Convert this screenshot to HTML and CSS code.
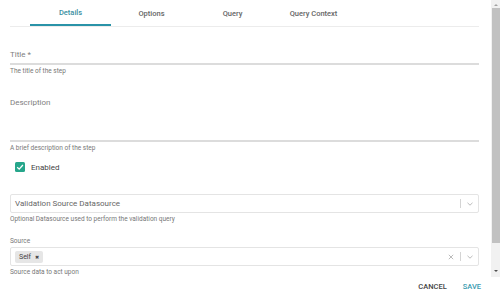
FILE: index.html
```html
<!DOCTYPE html>
<html>
<head>
<meta charset="utf-8">
<link rel="stylesheet" href="styles.css">
</head>
<body>
<div class="dialog">
  <div class="scroller">
    <div class="main">
      <nav class="tabs">
        <div class="tab active">Details</div>
        <div class="tab">Options</div>
        <div class="tab">Query</div>
        <div class="tab">Query Context</div>
      </nav>
      <div class="field title-field">
        <div class="label">Title *</div>
        <div class="underline"></div>
        <div class="helper">The title of the step</div>
      </div>
      <div class="field desc-field">
        <div class="label">Description</div>
        <div class="underline"></div>
        <div class="helper">A brief description of the step</div>
      </div>
      <div class="check-row">
        <span class="checkbox">
          <svg viewBox="0 0 10 10" width="10" height="10"><path d="M2.2 5.2 L4.2 7.1 L7.9 3" fill="none" stroke="#fff" stroke-width="1.3"/></svg>
        </span>
        <span class="check-label">Enabled</span>
      </div>
      <div class="select first-select">
        <span class="select-value placeholder">Validation Source Datasource</span>
        <span class="indicators">
          <span class="sep"></span>
          <svg class="chev" viewBox="0 0 10 10" width="10" height="10"><path d="M2.5 3.8 L5 6.2 L7.5 3.8" fill="none" stroke="#bbb" stroke-width="1"/></svg>
        </span>
      </div>
      <div class="helper sel-helper">Optional Datasource used to perform the validation query</div>
      <div class="small-label">Source</div>
      <div class="select second-select">
        <span class="select-value">
          <span class="chip">Self <span class="chip-x">✖</span></span>
        </span>
        <span class="indicators">
          <svg class="clear" viewBox="0 0 10 10" width="10" height="10"><path d="M2.8 2.8 L7.2 7.2 M7.2 2.8 L2.8 7.2" fill="none" stroke="#bbb" stroke-width="1"/></svg>
          <span class="sep"></span>
          <svg class="chev" viewBox="0 0 10 10" width="10" height="10"><path d="M2.5 3.8 L5 6.2 L7.5 3.8" fill="none" stroke="#bbb" stroke-width="1"/></svg>
        </span>
      </div>
      <div class="helper sel-helper">Source data to act upon</div>
    </div>
    <div class="scrollbar">
      <div class="arrow up"></div>
      <div class="thumb"></div>
      <div class="arrow down"></div>
    </div>
  </div>
  <div class="footer">
    <button class="btn cancel">CANCEL</button>
    <button class="btn save">SAVE</button>
  </div>
</div>
</body>
</html>
```
FILE: styles.css
```css
* { box-sizing: border-box; }
html, body { margin: 0; padding: 0; background: #fff; }
body { font-family: Roboto, "Liberation Sans", sans-serif; color: #444; }

.dialog { width: 500px; height: 296px; display: flex; flex-direction: column; }
.scroller { display: flex; height: 277px; }
.main { flex: 1; padding: 0 12px 0 10px; }

.tabs { display: flex; padding-left: 20px; height: 27px; border-bottom: 1px solid #ececec; }
.tab { width: 81px; text-align: center; font-size: 7.5px; font-weight: 500; color: #666; line-height: 27px; padding-bottom: 1px; }
.tab.active { color: #3a90a2; border-bottom: 2px solid #2a93a8; line-height: 26px; }

.field .label { font-size: 8px; color: #808080; }
.field .underline { height: 2px; background: #dcdcdc; }
.helper { font-size: 6.5px; color: #777; }
.title-field { margin-top: 23px; }
.title-field .label { line-height: 10px; margin-bottom: 3px; }
.title-field .helper { margin-top: 2px; }
.desc-field { margin-top: 23px; }
.desc-field .label { line-height: 10px; margin-bottom: 32px; }
.desc-field .helper { margin-top: 2px; }

.check-row { display: flex; align-items: center; margin-top: 9px; padding-left: 5px; height: 12px; }
.checkbox { width: 10px; height: 10px; background: #26a68b; border-radius: 1.5px; display: flex; }
.check-label { font-size: 8px; color: #444; margin-left: 6px; }

.select { height: 19px; border: 1px solid #e4e4e4; border-radius: 2px; display: flex; align-items: center; padding-left: 4px; }
.first-select { margin-top: 21px; }
.select-value { flex: 1; font-size: 8px; color: #666; display: flex; align-items: center; }
.indicators { display: flex; align-items: center; padding-right: 3px; }
.sep { width: 1px; height: 9px; background: #d4d4d4; margin: 0 4px; }
.chev, .clear { display: block; }
.sel-helper { margin-top: 2px; }
.small-label { font-size: 6.5px; color: #777; margin-top: 14px; margin-bottom: 2px; }
.chip { background: #e6e6e6; border-radius: 2px; font-size: 7px; color: #444; padding: 2px 4px; display: inline-flex; align-items: center; }
.chip-x { font-size: 5px; margin-left: 4px; }
.second-select .select-value { padding-left: 0; }

.scrollbar { width: 9px; background: #f1f1f1; display: flex; flex-direction: column; align-items: center; padding: 2px 0; }
.arrow { width: 0; height: 0; border-left: 2px solid transparent; border-right: 2px solid transparent; }
.arrow.up { border-bottom: 2px solid #a3a3a3; margin-top: 2px; }
.arrow.down { border-top: 2px solid #505050; margin-bottom: 3px; margin-top: auto; }
.thumb { width: 8px; height: 235px; background: #c1c1c1; margin-top: 2px; }

.footer { flex: 1; display: flex; justify-content: flex-end; align-items: center; padding-right: 19px; gap: 16px; }
.btn { border: 0; background: none; font-family: Roboto, "Liberation Sans", sans-serif; font-size: 7.5px; font-weight: 500; padding: 0; }
.btn.cancel { color: #444; }
.btn.save { color: #3a9bb0; }
```
